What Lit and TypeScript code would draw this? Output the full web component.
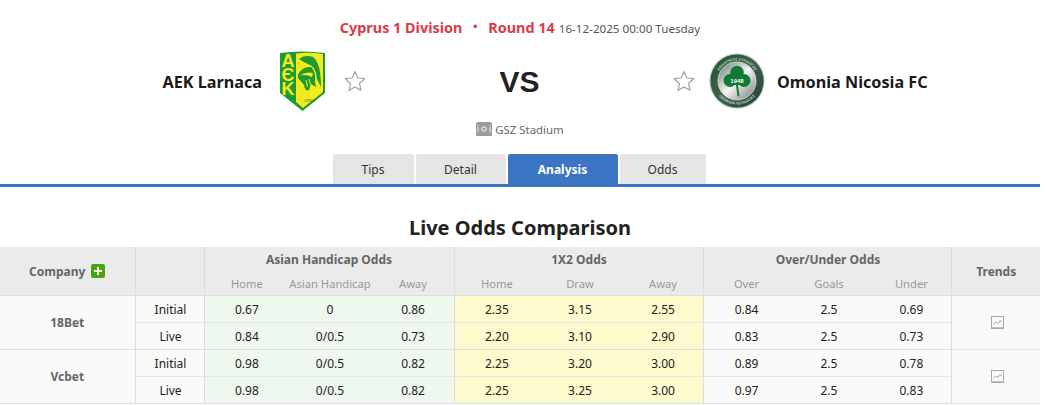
import { LitElement, html, css, svg } from "lit";
import { customElement } from "lit/decorators.js";

const star = svg`<svg class="star" viewBox="0 0 22 22" width="22" height="22"><path d="M11 1.6l2.800 6.400 6.900.7-5.200 4.600 1.500 6.800L11 17.100l-6 3.500 1.500-6.800L1.300 8.700 8.200 8z" fill="#fff" stroke="#a3a3a8" stroke-width="1.200" stroke-linejoin="round"/></svg>`;

const aek = svg`<svg class="crest" viewBox="0 0 45 60" width="45" height="60">
<path d="M0 2Q22 -1 45 2V42L22.500 60 0 42z" fill="#1f9a32"/>
<path d="M16 2.500Q30 1 43 3V41L23 57 16 51z" fill="#f1ea1c"/>
<text x="8" y="0" class="aek">ΑЄΚ</text>
<path d="M19 8Q25 3 33 6Q41 12 41 36L37 28Q36 15 28 13Q23 11 19 8z" fill="#1f9a32"/>
<path d="M18 24Q22 15 31 16Q36 20 35 31L36 36 31 33 29 39Q25 41 24 34L18 27z" fill="#1f9a32"/>
<path d="M20 24.500Q26 20 33 22L32 26Q26 23 20 24.500z" fill="#f1ea1c"/>
<path d="M26 29l1.500 7M29 28l1.500 6" stroke="#f1ea1c" stroke-width="1" fill="none"/>
<text x="29" y="51" class="yr">1994</text></svg>`;

const omonia = svg`<svg viewBox="0 0 56 56" width="56" height="56">
<defs><linearGradient id="sv" x1="0.100" y1="0.100" x2="0.900" y2="0.900"><stop offset="0" stop-color="#7f8d84"/><stop offset="0.500" stop-color="#f6f6f6"/><stop offset="1" stop-color="#84908a"/></linearGradient>
<linearGradient id="ring" x1="0" y1="0" x2="1" y2="1"><stop offset="0" stop-color="#1f5a38"/><stop offset="0.500" stop-color="#3f5f4c"/><stop offset="1" stop-color="#23402f"/></linearGradient>
<path id="otop" d="M7.500 28A20.500 20.500 0 0 1 48.500 28"/><path id="obot" d="M4.500 28A23.500 23.500 0 0 0 51.500 28"/></defs>
<circle cx="28" cy="28" r="27.500" fill="#a9bdaf"/><circle cx="28" cy="28" r="26.500" fill="url(#ring)"/>
<text class="otxt"><textPath href="#otop" startOffset="50%">ΑΘΛΗΤΙΚΟΣ ΣΥΛΛΟΓΟΣ</textPath></text>
<text class="otxt"><textPath href="#obot" startOffset="50%">ΟΜΟΝΟΙΑ ΛΕΥΚΩΣΙΑΣ</textPath></text>
<circle cx="28" cy="28" r="19" fill="url(#sv)" stroke="#dfe7e1" stroke-width="0.800"/>
<g fill="#0f7a34"><circle cx="28" cy="19.500" r="6.800"/><circle cx="21" cy="27.500" r="6.500"/><circle cx="35" cy="27.500" r="6.500"/><path d="M24 22h8v10h-8z"/><path d="M27 32h2l1.500 11.500-2-.5z"/></g>
<text x="28" y="30" class="est">1948</text></svg>`;

const stadium = svg`<svg viewBox="0 0 16 14" width="16" height="14"><rect width="16" height="14" rx="1.500" fill="#9c9c9c"/><path d="M2 4.500v5M14 4.500v5" stroke="#f0f0f0" stroke-width="1" fill="none"/><path d="M1 3.500h2M1 10.500h2M13 3.500h2M13 10.500h2" stroke="#d0d0d0" stroke-width="0.500"/><circle cx="8" cy="7" r="2.200" stroke="#fff" stroke-width="1" fill="none"/></svg>`;

const trend = svg`<svg viewBox="0 0 13 13" width="13" height="13"><rect x="0.500" y="0.500" width="12" height="12" fill="#fafafa" stroke="#a8a8a8"/><path d="M2.500 8.500l2.500-2.500 2 1.500 2-3 2 1.500" stroke="#a8a8a8" fill="none"/><path d="M0.500 11.500h12" stroke="#c4c4c4"/></svg>`;

const ROWS = [
  { co: "18Bet", rows: [
    ["Initial","0.67","0","0.86","2.35","3.15","2.55","0.84","2.5","0.69"],
    ["Live","0.84","0/0.5","0.73","2.20","3.10","2.90","0.83","2.5","0.73"]]},
  { co: "Vcbet", rows: [
    ["Initial","0.98","0/0.5","0.82","2.25","3.20","3.00","0.89","2.5","0.78"],
    ["Live","0.98","0/0.5","0.82","2.25","3.25","3.00","0.97","2.5","0.83"]]},
];

@customElement("app-root")
export class AppRoot extends LitElement {
  static styles = css`
    :host { display: block; width: 1040px; font-family: "Noto Sans", "DejaVu Sans", sans-serif; color: #222; background: #fff; }
    .head { display: flex; flex-direction: column; align-items: center; padding-top: 18px; }
    .league { display: flex; align-items: baseline; height: 20px; line-height: 20px; }
    .league b { font-size: 14.400px; font-weight: 700; color: #db3b46; }
    .league i { font-style: normal; font-weight: 700; color: #db3b46; font-size: 14px; margin: 0 6px; font-family: "Noto Sans CJK JP", sans-serif; align-self: flex-start; line-height: 15px; }
    .league span { font-size: 11.650px; color: #555; margin-left: 4px; }
    .match { display: grid; grid-template-columns: 262px 18px 45px 19px 22px 307px 22px 14px 56px 12px 1fr; align-items: center; width: 100%; height: 60px; margin-top: 13px; }
    .team { font-size: 16.200px; font-weight: 700; color: #1a1a1a; white-space: nowrap; line-height: 24px; padding-top: 1px; }
    .team.home { text-align: right; grid-column: 1; }
    .logo { display: flex; }
    .star { display: block; }
    .crest { overflow: visible; }
    .vs { font-family: "Liberation Sans", sans-serif; text-align: center; font-size: 30px; font-weight: 700; color: #222; padding-top: 1px; }
    .aek { font: 700 18px "Liberation Sans", sans-serif; fill: #f1ea1c; writing-mode: vertical-rl; text-orientation: upright; letter-spacing: -6.200px; }
    .yr { font: 5px "Liberation Serif", serif; fill: #1f7a2c; text-anchor: middle; }
    .est { font: 700 6px "Liberation Sans", sans-serif; fill: #fff; text-anchor: middle; }
    .otxt { font: 700 3.800px "Liberation Sans", sans-serif; fill: #c3d3c8; text-anchor: middle; }
    .venue { display: flex; align-items: center; gap: 3px; font-size: 11.400px; color: #666; margin-top: 10px; height: 16px; }
    .venue svg { display: block; }
    .tabs { display: flex; gap: 2px; justify-content: center; margin-top: 17px; width: 100%; border-bottom: 3px solid #3c75c4; box-sizing: border-box; padding-right: 2px; }
    .tab { height: 30px; line-height: 31px; background: #e5e5e5; text-align: center; font-size: 12px; color: #333; border-radius: 2px 2px 0 0; }
    .tab.on { background: #3c75c4; color: #fff; font-weight: 700; }
    h2 { margin: 28px 0 0; font-size: 20px; line-height: 26px; text-align: center; font-weight: 700; color: #222; }
    table { border-collapse: collapse; table-layout: fixed; width: 1040px; margin-top: 6px; font-size: 12px; }
    th { background: #ebebeb; font-weight: 700; color: #666; font-size: 12px; padding: 0; height: 24px; white-space: nowrap; }
    th.sub { font-weight: 400; color: #999; height: 24px; border-bottom: 1px solid #ddd; font-size: 11.200px; padding-left: 2px; }
    th.bl, td.bl { border-left: 1px solid #ddd; }
    th.tall { border-bottom: 1px solid #ddd; }
    td { padding: 0 0 0 2px; height: 26px; text-align: center; border-bottom: 1px solid #e5e5e5; color: #222; background: #fafafa; }
    td.co { font-weight: 700; color: #666; border-bottom-color: #ddd; padding: 0; }
    td.ah { background: #eef8ee; }
    td.x { background: #fdfbcd; }
    tr.end td { border-bottom-color: #ddd; }
    .plus { display: inline-block; vertical-align: -2px; width: 14px; height: 14px; margin-left: 6px; background: #4ca20f; border-radius: 2px; position: relative; }
    .plus::before { content: ""; position: absolute; left: 3px; top: 6px; width: 8px; height: 2px; background: #fff; }
    .plus::after { content: ""; position: absolute; left: 6px; top: 3px; width: 2px; height: 8px; background: #fff; }
    td svg { display: block; margin: 0 auto; }
  `;

  render() {
    const widths = [135, 69, 250/3, 250/3, 250/3, 250/3, 250/3, 250/3, 248/3, 248/3, 248/3, 88];
    return html`
      <div class="head">
        <div class="league"><b>Cyprus 1 Division</b><i>・</i><b>Round 14</b><span>16-12-2025 00:00 Tuesday</span></div>
        <div class="match">
          <div class="team home">AEK Larnaca</div><div></div>
          <div class="logo">${aek}</div><div></div>
          <div class="logo">${star}</div>
          <div class="vs">VS</div>
          <div class="logo">${star}</div><div></div>
          <div class="logo">${omonia}</div><div></div>
          <div class="team">Omonia Nicosia FC</div>
        </div>
        <div class="venue">${stadium}GSZ Stadium</div>
        <div class="tabs">
          <div class="tab" style="width:81px">Tips</div>
          <div class="tab" style="width:90px">Detail</div>
          <div class="tab on" style="width:110px">Analysis</div>
          <div class="tab" style="width:86px">Odds</div>
        </div>
      </div>
      <h2>Live Odds Comparison</h2>
      <table>
        <colgroup>${widths.map((w) => html`<col style="width:${w}px">`)}</colgroup>
        <thead>
          <tr><th rowspan="2" class="tall">Company<span class="plus"></span></th><th rowspan="2" class="tall bl"></th>
            <th colspan="3" class="bl">Asian Handicap Odds</th><th colspan="3" class="bl">1X2 Odds</th><th colspan="3" class="bl">Over/Under Odds</th>
            <th rowspan="2" class="tall bl">Trends</th></tr>
          <tr>${["Home","Asian Handicap","Away","Home","Draw","Away","Over","Goals","Under"].map((t,i)=>html`<th class="sub ${i%3===0?"bl":""}">${t}</th>`)}</tr>
        </thead>
        <tbody>
          ${ROWS.map((g)=>g.rows.map((r,ri)=>html`<tr class=${ri===1?"end":""}>
            ${ri===0?html`<td rowspan="2" class="co">${g.co}</td>`:""}
            ${r.map((v,i)=>html`<td class="${i===0||i===1||i===4||i===7?"bl":""} ${i>=1&&i<=3?"ah":""} ${i>=4&&i<=6?"x":""}">${v}</td>`)}
            ${ri===0?html`<td rowspan="2" class="bl">${trend}</td>`:""}
          </tr>`))}
        </tbody>
      </table>`;
  }
}
